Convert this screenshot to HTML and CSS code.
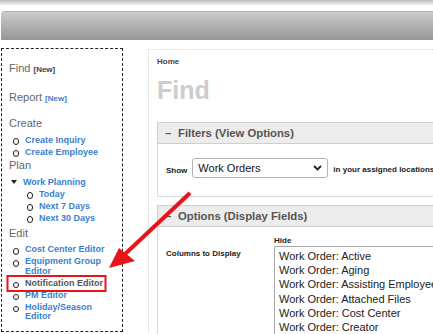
FILE: index.html
```html
<!DOCTYPE html>
<html lang="en">
<head>
    <meta charset="UTF-8">
    <meta name="viewport" content="width=device-width, initial-scale=1.0">
    <title>Find</title>
    <link rel="stylesheet" href="styles.css">
</head>
<body>
    <div class="top-strip"></div>
    <div class="header-bar"></div>

    <div class="layout">
        <nav class="sidebar">
            <div class="nav-title">Find <span class="tag">[New]</span></div>
            <div class="nav-title nav-report">Report <span class="tag tag-blue">[New]</span></div>
            <div class="nav-title nav-create">Create</div>
            <ul class="nav-list">
                <li><a href="#">Create Inquiry</a></li>
                <li><a href="#">Create Employee</a></li>
            </ul>
            <div class="nav-title nav-plan">Plan</div>
            <div class="nav-tree">
                <span class="tree-toggle"></span>
                <a href="#">Work Planning</a>
            </div>
            <ul class="nav-list nav-sub">
                <li><a href="#">Today</a></li>
                <li><a href="#">Next 7 Days</a></li>
                <li><a href="#">Next 30 Days</a></li>
            </ul>
            <div class="nav-title nav-edit">Edit</div>
            <ul class="nav-list nav-edit-list">
                <li><a href="#">Cost Center Editor</a></li>
                <li><a href="#">Equipment Group Editor</a></li>
                <li class="current"><a href="#">Notification Editor</a></li>
                <li><a href="#">PM Editor</a></li>
                <li><a href="#">Holiday/Season Editor</a></li>
            </ul>
        </nav>

        <main class="main">
            <div class="breadcrumb">Home</div>
            <h1 class="page-title">Find</h1>

            <section class="panel">
                <div class="panel-header"><span class="toggle">&ndash;</span>Filters (View Options)</div>
                <div class="panel-body filters">
                    <span class="label">Show</span>
                    <div class="select">
                        <span>Work Orders</span>
                        <svg width="9" height="6" viewBox="0 0 9 6"><path d="M1 1 L4.5 4.5 L8 1" fill="none" stroke="#222" stroke-width="1.8"/></svg>
                    </div>
                    <span class="label">in your assigned locations</span>
                </div>
            </section>

            <section class="panel panel-options">
                <div class="panel-header"><span class="toggle">&ndash;</span>Options (Display Fields)</div>
                <div class="panel-body options">
                    <span class="label columns-label">Columns to Display</span>
                    <div class="column-pick">
                        <span class="label">Hide</span>
                        <div class="listbox">
                            <div>Work Order: Active</div>
                            <div>Work Order: Aging</div>
                            <div>Work Order: Assisting Employees</div>
                            <div>Work Order: Attached Files</div>
                            <div>Work Order: Cost Center</div>
                            <div>Work Order: Creator</div>
                        </div>
                    </div>
                </div>
            </section>
        </main>
    </div>

    <!-- screenshot annotation -->
    <svg class="annotation" width="433" height="334" viewBox="0 0 433 334">
        <rect x="7.5" y="276" width="98" height="15" fill="none" stroke="#e8141a" stroke-width="2"/>
        <line x1="190" y1="193" x2="124" y2="255" stroke="#e8141a" stroke-width="4"/>
        <polygon points="109,268 119,248 135,261" fill="#e8141a"/>
    </svg>
</body>
</html>
```

FILE: styles.css
```css
* {
    box-sizing: border-box;
    margin: 0;
    padding: 0;
}

body {
    font-family: 'Liberation Sans', Arial, sans-serif;
    color: #333;
    background-color: #fff;
    overflow: hidden;
    position: relative;
    height: 334px;
}

a {
    text-decoration: none;
}

.top-strip {
    height: 6px;
    background: linear-gradient(#bcbcbc, #fff);
}

.header-bar {
    height: 29px;
    margin: 5px 0 0 1px;
    border-top: 1px solid #b0b0b0;
    border-radius: 4px 0 0 0;
    background: linear-gradient(#cbcbcb, #969696);
}

.layout {
    display: flex;
    align-items: flex-start;
    margin-top: 8px;
}

/* sidebar */

.sidebar {
    width: 122px;
    flex-shrink: 0;
    margin-left: 1px;
    border: 1px dashed #222;
    padding: 12px 10px 9px 7px;
}

.nav-title {
    font-size: 11px;
    line-height: 14px;
    color: #666;
}

.nav-report {
    margin-top: 15px;
}

.nav-create {
    margin-top: 12px;
}

.nav-plan {
    margin-top: 1px;
}

.nav-edit {
    margin-top: 3px;
}

.tag {
    font-size: 8px;
    line-height: 1;
    font-weight: bold;
    color: #3b4250;
}

.tag-blue {
    color: #3a7fd0;
}

.nav-list {
    list-style: none;
    display: flex;
    flex-direction: column;
    gap: 2px;
    margin-top: 5px;
}

.nav-list li {
    display: flex;
    align-items: flex-start;
    gap: 6px;
    padding-left: 3px;
    font-size: 9px;
    font-weight: bold;
    line-height: 10px;
}

.nav-list li::before {
    content: "";
    flex-shrink: 0;
    width: 4.5px;
    height: 4.5px;
    margin: 3px 0 0 0.5px;
    border: 1.5px solid #222;
    border-radius: 50%;
}

.nav-list a {
    color: #3a7fd0;
}

.nav-list li.current a {
    color: #555;
}

.nav-edit-list {
    gap: 2.5px;
}

.nav-edit-list li {
    line-height: 9.5px;
}

.nav-sub {
    margin-top: 2px;
    padding-left: 14px;
}

.nav-tree {
    display: flex;
    align-items: center;
    gap: 6px;
    margin-top: 5px;
    padding-left: 2px;
    font-size: 9px;
    font-weight: bold;
    line-height: 10px;
}

.nav-tree a {
    color: #3a7fd0;
}

.tree-toggle {
    width: 0;
    height: 0;
    border-left: 3px solid transparent;
    border-right: 3px solid transparent;
    border-top: 4px solid #222;
}

/* main */

.main {
    flex: 1;
    min-width: 0;
    overflow: hidden;
    margin: 1px 0 0 25px;
    height: 300px;
    padding: 7px 0 0 8px;
    border-left: 1px dotted #d4d4d4;
    border-top: 1px dotted #d4d4d4;
}

.breadcrumb {
    font-size: 8px;
    font-weight: bold;
    line-height: 10px;
    color: #444;
}

.page-title {
    margin-top: 8px;
    font-size: 25px;
    line-height: 30px;
    color: #cdcdcd;
}

.panel {
    width: 330px;
    margin-top: 17px;
}

.panel-options {
    margin-top: 8px;
}

.panel-header {
    height: 22px;
    padding-left: 7px;
    border: 1px solid #cfcfcf;
    background-color: #ececec;
    font-size: 11.3px;
    font-weight: bold;
    line-height: 20px;
    color: #555;
}

.toggle {
    display: inline-block;
    width: 13px;
}

.panel-body {
    border: 1px solid #dcdcdc;
    border-top: none;
    padding-left: 8px;
}

.label {
    font-size: 8px;
    font-weight: bold;
    color: #222;
}

.filters {
    height: 53px;
    display: flex;
    align-items: center;
    gap: 4px;
    padding-bottom: 4px;
}

.filters .label:first-child {
    margin-right: 1px;
    padding-top: 4px;
}

.filters .label:last-child {
    padding-top: 2px;
    margin-left: 1px;
    white-space: nowrap;
}

.select {
    width: 136px;
    height: 20px;
    display: flex;
    align-items: center;
    justify-content: space-between;
    padding: 0 5px;
    border: 1px solid #b4b4b4;
    border-radius: 3px;
    font-size: 11px;
    color: #111;
}

.options {
    display: grid;
    grid-template-columns: 108px 1fr;
    padding-top: 9px;
    height: 120px;
}

.columns-label {
    margin-top: 13px;
    line-height: 10px;
}

.column-pick .label {
    display: block;
    line-height: 10px;
}

.listbox {
    border: 1px solid #a9a9a9;
    padding: 2px 4px;
    font-size: 11px;
    line-height: 14.2px;
    color: #222;
    white-space: nowrap;
}

.annotation {
    position: absolute;
    left: 0;
    top: 0;
    pointer-events: none;
}
```
